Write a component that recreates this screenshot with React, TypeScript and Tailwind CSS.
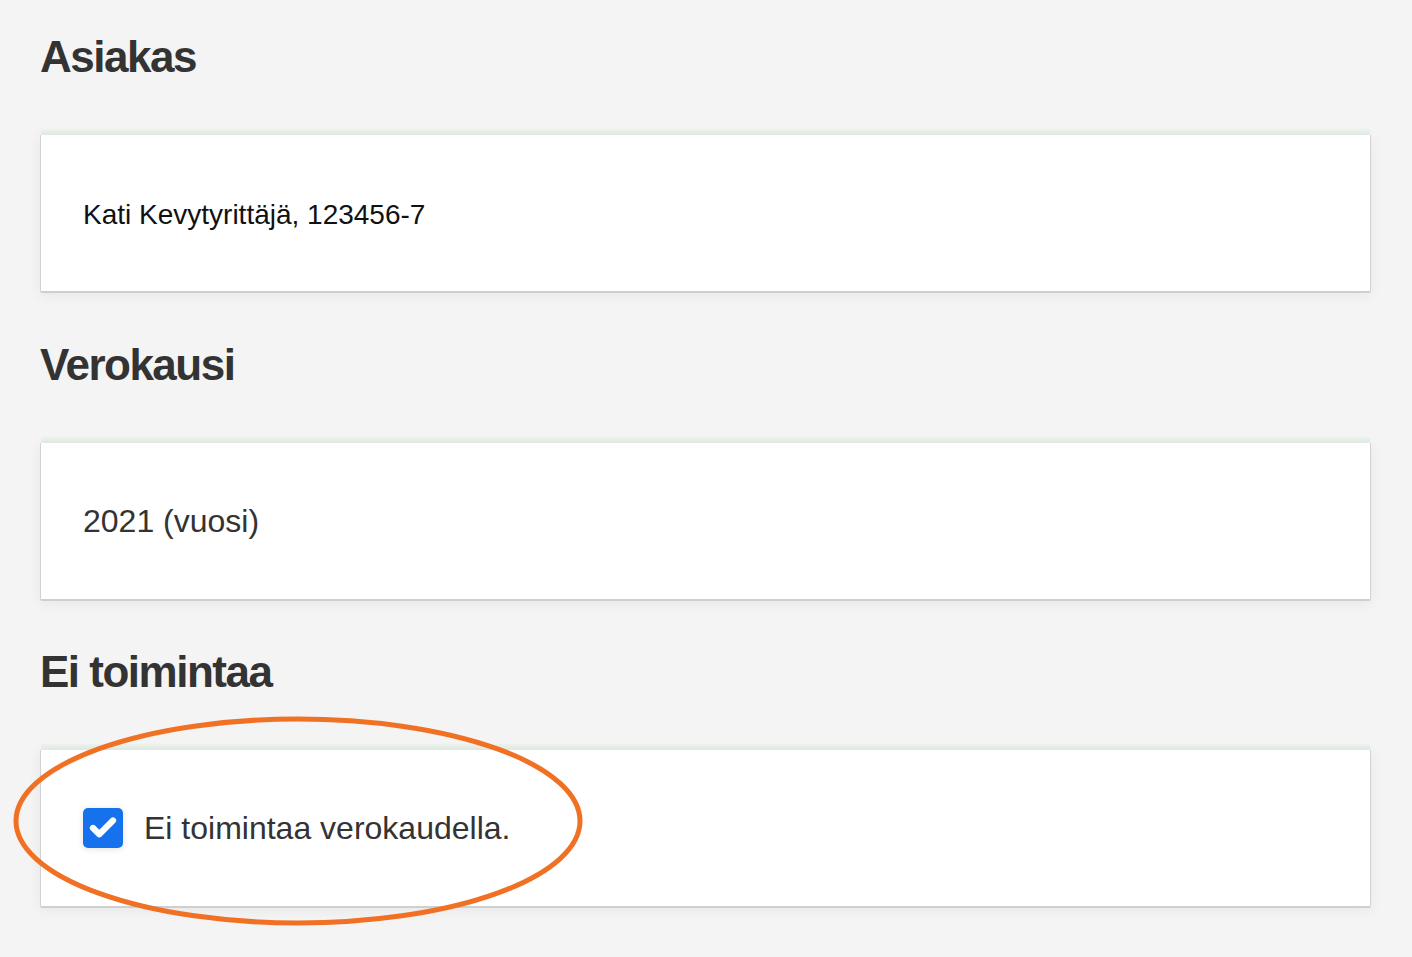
import { Check } from 'lucide-react';

const font = { fontFamily: '"Liberation Sans", Arial, sans-serif' };

function Heading({ children }: { children: React.ReactNode }) {
  return (
    <h2 className="text-[44px] leading-none font-bold text-[#333] h-[44px] mb-[50px] tracking-[-1.5px]">
      {children}
    </h2>
  );
}

function Card({ children }: { children: React.ReactNode }) {
  return (
    <div>
      <div className="h-[6px] mx-[1px] bg-gradient-to-b from-[#edf3ee] to-[#e2ede4]" />
      <div className="h-[158px] bg-white border-x border-x-[#d2d2d2] border-b-2 border-b-[#cfcfcf] rounded-b-[2px] shadow-[0_2px_14px_rgba(0,0,0,0.06)] flex items-center px-[42px]">
        {children}
      </div>
    </div>
  );
}

export default function App() {
  return (
    <div className="min-h-screen bg-[#f4f4f4] pl-[40px] pr-[41px] pt-[35px] relative overflow-hidden" style={font}>
      <Heading>Asiakas</Heading>
      <Card>
        <span className="text-[28px] text-[#111] mt-[3px]">Kati Kevytyrittäjä, 123456-7</span>
      </Card>

      <div className="mt-[50px]">
        <Heading>Verokausi</Heading>
      </div>
      <Card>
        <span className="text-[32px] text-[#333]">2021 (vuosi)</span>
      </Card>

      <div className="mt-[49px]">
        <Heading>Ei toimintaa</Heading>
      </div>
      <Card>
        <label className="flex items-center gap-[21px]">
          <span className="w-[40px] h-[40px] rounded-[5px] bg-[#1672ec] flex items-center justify-center shadow-[0_1px_6px_rgba(0,0,0,0.12)]">
            <Check size={30} strokeWidth={5} color="white" />
          </span>
          <span className="text-[32px] text-[#333]">Ei toimintaa verokaudella.</span>
        </label>
      </Card>

      <svg
        className="absolute left-0 top-0 pointer-events-none"
        width="1412"
        height="957"
        viewBox="0 0 1412 957"
      >
        <ellipse
          cx="298"
          cy="821"
          rx="282"
          ry="102"
          fill="none"
          stroke="#f07124"
          strokeWidth="5"
        />
      </svg>
    </div>
  );
}
